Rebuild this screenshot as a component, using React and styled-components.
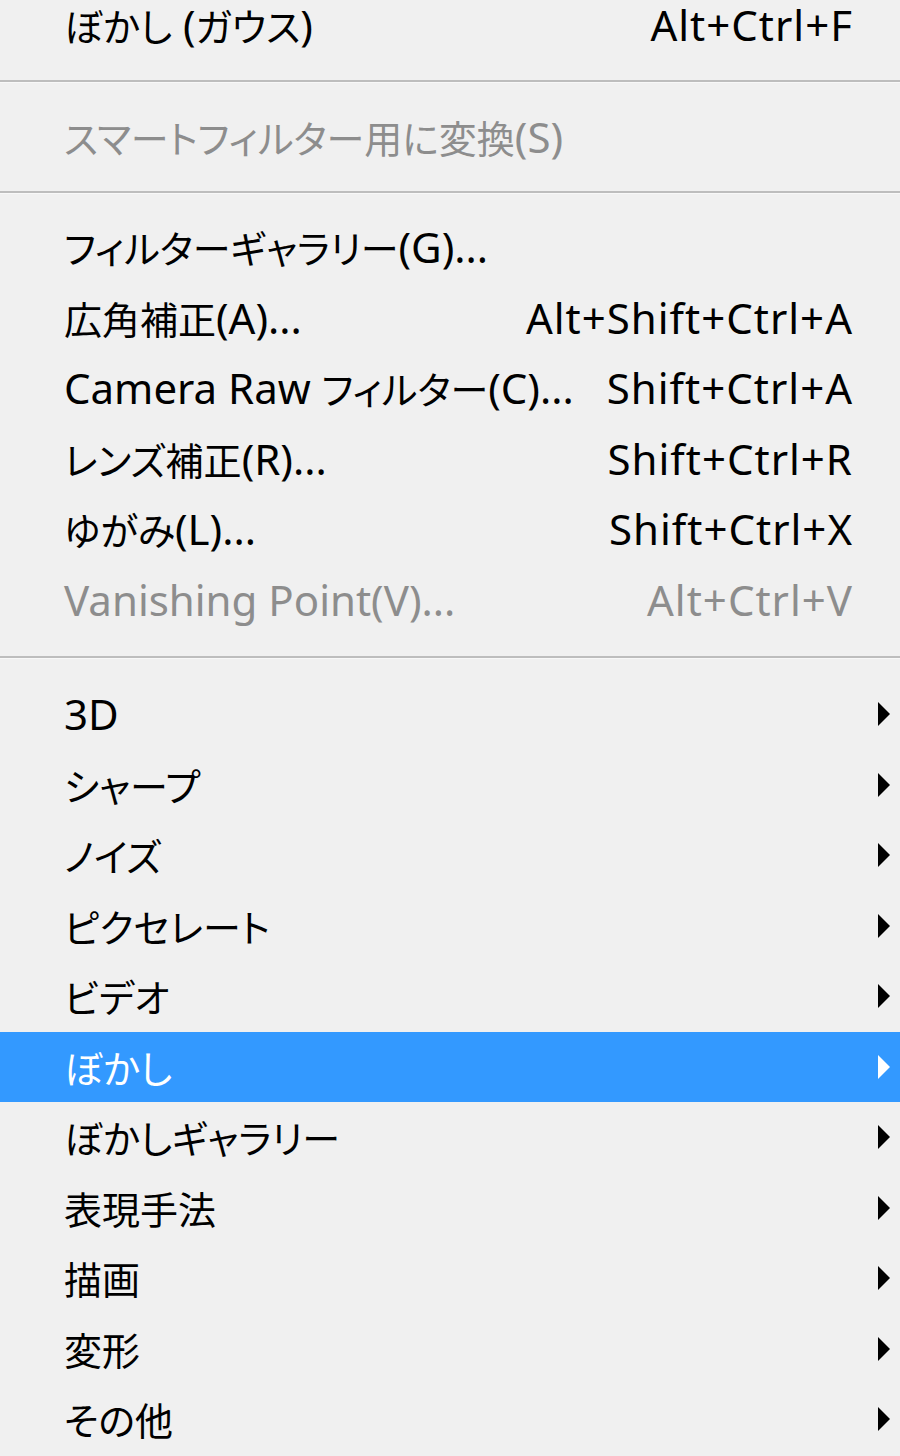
import React from 'react'
import styled, { createGlobalStyle } from 'styled-components'

const GlobalStyle = createGlobalStyle`
  html, body {
    margin: 0;
    padding: 0;
    background: #f0f0f0;
    overflow: hidden;
  }
`

const Menu = styled.div`
  width: 900px;
  height: 1456px;
  overflow: hidden;
  background: #f0f0f0;
  font-family: 'Noto Sans', 'Noto Sans CJK JP', sans-serif;
  font-size: 42px;
  font-feature-settings: 'palt';
  display: flex;
  flex-direction: column;
`

const Items = styled.div`
  margin-top: -10px;
  display: flex;
  flex-direction: column;
`

const Row = styled.div`
  height: 70.5px;
  flex-shrink: 0;
  display: flex;
  align-items: center;
  padding-left: 64px;
  background: ${p => (p.active ? '#3399ff' : 'transparent')};
  color: ${p => (p.active ? '#ffffff' : p.disabled ? '#8d8d8d' : '#000000')};
  white-space: nowrap;
`

const Label = styled.span`
  flex: 1;
  line-height: 1;
`

const Shortcut = styled.span`
  line-height: 1;
  letter-spacing: 1px;
`

// CJK glyphs are set smaller than the Latin ones, as in the UI font
const Kana = styled.span`
  font-family: 'Noto Sans CJK JP', sans-serif;
  font-size: 38px;
`

const ArrowSlot = styled.span`
  width: 47px;
  flex-shrink: 0;
  display: flex;
  align-items: center;
  padding-left: 24px;
  box-sizing: border-box;
`

const Separator = styled.div`
  height: ${p => p.size}px;
  flex-shrink: 0;
  display: flex;
  align-items: center;
  &::after {
    content: '';
    display: block;
    width: 100%;
    height: 2px;
    background: #bdbdbd;
    border-bottom: 1px solid #f8f8f8;
  }
`

const Arrow = ({ color }) => (
  <svg width="14" height="26" viewBox="0 0 14 26">
    <polygon points="1,1 13,13 1,25" fill={color} />
  </svg>
)

const cjk = /([\u3000-\u30ff\u4e00-\u9fff\uff00-\uffef]+)/

const MixedText = ({ text }) =>
  text.split(cjk).map((part, i) =>
    cjk.test(part) ? <Kana key={i}>{part}</Kana> : <React.Fragment key={i}>{part}</React.Fragment>
  )

const groups = [
  { sep: 41, items: [{ label: 'ぼかし (ガウス)', key: 'Alt+Ctrl+F' }] },
  { sep: 40, items: [{ label: 'スマートフィルター用に変換(S)', disabled: true }] },
  {
    sep: 44,
    items: [
      { label: 'フィルターギャラリー(G)...' },
      { label: '広角補正(A)...', key: 'Alt+Shift+Ctrl+A' },
      { label: 'Camera Raw フィルター(C)...', key: 'Shift+Ctrl+A' },
      { label: 'レンズ補正(R)...', key: 'Shift+Ctrl+R' },
      { label: 'ゆがみ(L)...', key: 'Shift+Ctrl+X' },
      { label: 'Vanishing Point(V)...', key: 'Alt+Ctrl+V', disabled: true }
    ]
  },
  {
    items: [
      { label: '3D', sub: true },
      { label: 'シャープ', sub: true },
      { label: 'ノイズ', sub: true },
      { label: 'ピクセレート', sub: true },
      { label: 'ビデオ', sub: true },
      { label: 'ぼかし', sub: true, active: true },
      { label: 'ぼかしギャラリー', sub: true },
      { label: '表現手法', sub: true },
      { label: '描画', sub: true },
      { label: '変形', sub: true },
      { label: 'その他', sub: true }
    ]
  }
]

const App = () => {
  return (
    <Menu>
      <GlobalStyle />
      <Items>
        {groups.map((g, gi) => (
          <React.Fragment key={gi}>
            {g.items.map(item => (
              <Row key={item.label} active={item.active} disabled={item.disabled}>
                <Label>
                  <MixedText text={item.label} />
                </Label>
                {item.key && <Shortcut>{item.key}</Shortcut>}
                <ArrowSlot>
                  {item.sub && <Arrow color={item.active ? '#ffffff' : '#000000'} />}
                </ArrowSlot>
              </Row>
            ))}
            {g.sep && <Separator size={g.sep} />}
          </React.Fragment>
        ))}
      </Items>
    </Menu>
  )
}

export default App
